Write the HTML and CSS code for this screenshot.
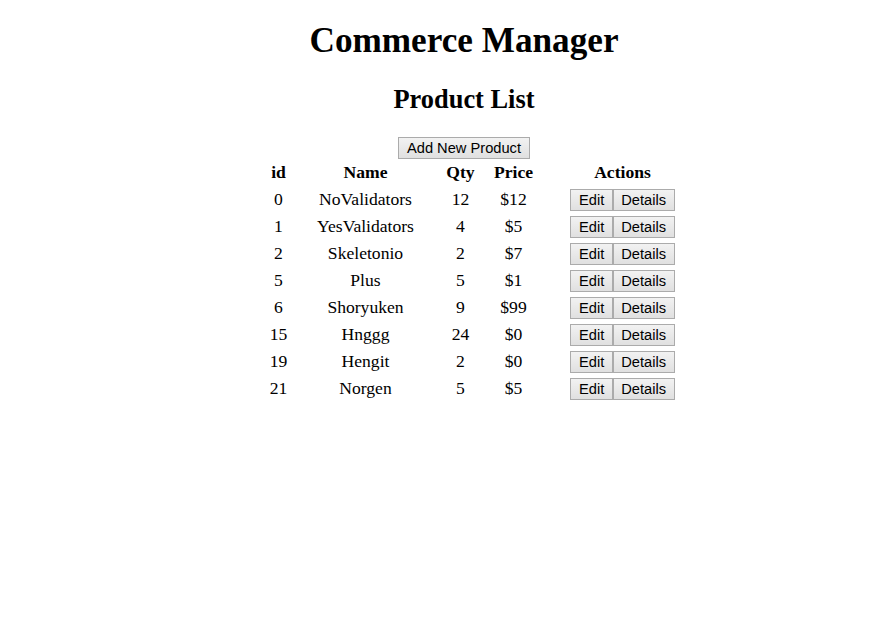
FILE: index.html
```html
<!DOCTYPE html>
<html>
<head>
<meta charset="utf-8">
<link rel="stylesheet" href="styles.css">
</head>
<body>
<div class="app">
  <h1 class="title">Commerce Manager</h1>
  <h2 class="subtitle">Product List</h2>
  <div class="toolbar"><button class="btn">Add New Product</button></div>
  <table class="products">
    <thead>
      <tr><th class="c-id">id</th><th class="c-name">Name</th><th class="c-qty">Qty</th><th class="c-price">Price</th><th class="c-act">Actions</th></tr>
    </thead>
    <tbody>
      <tr><td>0</td><td>NoValidators</td><td>12</td><td>$12</td><td><button class="btn">Edit</button><button class="btn">Details</button></td></tr>
      <tr><td>1</td><td>YesValidators</td><td>4</td><td>$5</td><td><button class="btn">Edit</button><button class="btn">Details</button></td></tr>
      <tr><td>2</td><td>Skeletonio</td><td>2</td><td>$7</td><td><button class="btn">Edit</button><button class="btn">Details</button></td></tr>
      <tr><td>5</td><td>Plus</td><td>5</td><td>$1</td><td><button class="btn">Edit</button><button class="btn">Details</button></td></tr>
      <tr><td>6</td><td>Shoryuken</td><td>9</td><td>$99</td><td><button class="btn">Edit</button><button class="btn">Details</button></td></tr>
      <tr><td>15</td><td>Hnggg</td><td>24</td><td>$0</td><td><button class="btn">Edit</button><button class="btn">Details</button></td></tr>
      <tr><td>19</td><td>Hengit</td><td>2</td><td>$0</td><td><button class="btn">Edit</button><button class="btn">Details</button></td></tr>
      <tr><td>21</td><td>Norgen</td><td>5</td><td>$5</td><td><button class="btn">Edit</button><button class="btn">Details</button></td></tr>
    </tbody>
  </table>
</div>
</body>
</html>
```
FILE: styles.css
```css
body {
  margin: 0;
  font-family: "Liberation Serif", "Times New Roman", serif;
  font-size: 17.6px;
  color: #000;
  background: #fff;
}
.app {
  padding-left: 55px;
  display: flex;
  flex-direction: column;
  align-items: center;
}
.title {
  font-size: 35.2px;
  margin: 21px 0 0;
  line-height: 40px;
}
.subtitle {
  font-size: 26.4px;
  margin: 23px 0 0;
  line-height: 30px;
}
.toolbar {
  display: flex;
  margin-top: 23px;
}
.btn {
  font-family: "Liberation Sans", Arial, sans-serif;
  font-size: 14.67px;
  line-height: 16px;
  color: #000;
  padding: 2px 7.5px;
  border: 1px solid #ababab;
  border-radius: 0;
  background: linear-gradient(#f2f2f2, #e0e0e0);
  margin: 0;
}
.products {
  border-collapse: collapse;
  text-align: center;
  margin-left: 37px;
}
.products th, .products td {
  padding: 0;
  height: 27px;
}
.c-id { width: 50px; }
.c-name { width: 124px; }
.c-qty { width: 66px; }
.c-price { width: 40px; }
.c-act { width: 178px; }
```
